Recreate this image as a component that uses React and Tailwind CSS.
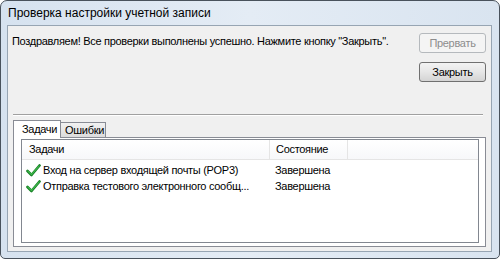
import React from "react";

function Check() {
  return (
    <svg width="15" height="13" viewBox="0 0 15 13" className="shrink-0">
      <path d="M1.5 7 L5.5 11 L13.5 1.5" fill="none" stroke="#137d22" strokeWidth="2.6" strokeLinecap="round" strokeLinejoin="round" />
      <path d="M1.9 7 L5.5 10.5 L13.2 1.9" fill="none" stroke="#3db54a" strokeWidth="1.2" strokeLinecap="round" strokeLinejoin="round" />
    </svg>
  );
}

export default function App() {
  const ui = { fontFamily: '"Liberation Sans", Arial, sans-serif' };
  const title = { fontFamily: '"Liberation Sans", Arial, sans-serif' };
  return (
    <div className="w-[500px] h-[259px] bg-white">
      <div className="w-[500px] h-[259px] rounded-t-[7px] rounded-b-[5px] border border-[#49525c] bg-gradient-to-r from-[#d6e2ef] via-[#e4ecf5] to-[#d9e4f0] pl-[6px] pr-[7px] pb-[6px] flex flex-col">
        <div className="h-[24px] flex items-center pl-[1px] text-[12px] text-black" style={title}>
          Проверка настройки учетной записи
        </div>
        <div className="flex-1 border border-[#97a5b3] bg-[#f0f0f0] flex flex-col text-[11px] tracking-[-0.3px] text-black" style={ui}>
          <div className="flex justify-between pl-[4px] pr-[5px] pt-[7px]">
            <div className="mt-[1px] leading-[14px]">
              Поздравляем! Все проверки выполнены успешно. Нажмите кнопку "Закрыть".
            </div>
            <div className="flex flex-col gap-[9px]">
              <div className="w-[67px] h-[20px] border border-[#b5b9bd] rounded-[3px] bg-[#f4f4f4] text-[#8d8d8d] flex items-center justify-center">
                Прервать
              </div>
              <div className="w-[67px] h-[20px] border border-[#707070] rounded-[3px] bg-gradient-to-b from-[#f3f3f3] via-[#e6e6e6] to-[#d4d4d4] flex items-center justify-center">
                Закрыть
              </div>
            </div>
          </div>
          <div className="ml-[5px] mr-[8px] mt-[32px] border-t border-[#a0a0a0] border-b border-b-white" />
          <div className="ml-[5px] mr-[5px] mt-[3px] flex-1 flex flex-col mb-[4px]">
            <div className="flex items-end h-[18px]">
              <div className="w-[48px] h-[18px] border border-b-0 border-[#898c95] bg-white flex items-center pl-[8px] relative z-10 mb-[-1px]">
                Задачи
              </div>
              <div className="w-[45px] h-[15px] border border-b-0 border-l-0 border-[#898c95] bg-gradient-to-b from-[#f2f2f2] to-[#dcdcdc] flex items-center pl-[4px]">
                Ошибки
              </div>
            </div>
            <div className="flex-1 border border-[#898c95] bg-white pt-[1px] pl-[7px] pr-[6px] pb-[3px] flex">
              <div className="flex-1 border border-[#828790] bg-white flex flex-col">
                <div className="h-[20px] flex border-b border-[#e5e5e5] bg-gradient-to-b from-white to-[#f7f8fa]">
                  <div className="w-[248px] border-r border-[#e5e5e5] flex items-center pl-[7px]">Задачи</div>
                  <div className="w-[78px] border-r border-[#e5e5e5] flex items-center pl-[6px]">Состояние</div>
                  <div className="flex-1" />
                </div>
                <div className="pt-[2px] flex flex-col">
                  <div className="h-[16px] flex items-center">
                    <div className="w-[248px] flex items-center pl-[4px] gap-[2px]">
                      <Check />
                      <span>Вход на сервер входящей почты (POP3)</span>
                    </div>
                    <div className="pl-[5px]">Завершена</div>
                  </div>
                  <div className="h-[16px] flex items-center">
                    <div className="w-[248px] flex items-center pl-[4px] gap-[2px]">
                      <Check />
                      <span className="whitespace-nowrap">Отправка тестового электронного сообщ...</span>
                    </div>
                    <div className="pl-[5px]">Завершена</div>
                  </div>
                </div>
              </div>
            </div>
          </div>
        </div>
      </div>
    </div>
  );
}
